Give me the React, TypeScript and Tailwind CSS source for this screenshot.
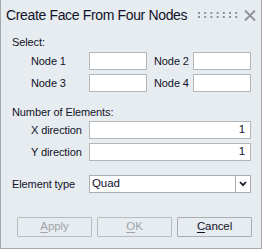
import React from "react";

const font = { fontFamily: '"Liberation Sans", Arial, sans-serif' };

function Dots() {
  const cols = [0, 1, 2, 3, 4, 5, 6];
  return (
    <svg width="40" height="8" viewBox="0 0 40 8" className="block">
      {cols.map((i) => (
        <g key={i}>
          <rect x={i * 6.2} y={1} width={2} height={2} fill="#8f9398" />
          <rect x={i * 6.2} y={5} width={2} height={2} fill="#8f9398" />
        </g>
      ))}
    </svg>
  );
}

function Input({ w, value }: { w: string; value?: string }) {
  return (
    <div
      className={`${w} h-[18px] bg-white border border-[#b3b7ba] flex items-center justify-end pr-[5px] text-[11.5px] text-[#14142a]`}
    >
      {value}
    </div>
  );
}

export default function App() {
  return (
    <div
      style={font}
      className="w-[262px] h-[249px] bg-[#e6ecf0] border-x border-b border-[#a5a9ad] flex flex-col text-[#121228] text-[11px] tracking-[-0.1px]"
    >
      <div className="h-[30px] flex items-center pl-[5px] pr-[4px]">
        <span className="text-[14px] tracking-[-0.35px] leading-none">Create Face From Four Nodes</span>
        <div className="ml-auto flex items-center gap-[6px]">
          <div className="mt-[-1px]">
            <Dots />
          </div>
          <svg width="12" height="11" viewBox="0 0 12 11" className="block mr-[1px]">
            <path d="M1 0.5 L11 10.5 M11 0.5 L1 10.5" stroke="#8d9196" strokeWidth="1.9" />
          </svg>
        </div>
      </div>

      <div className="mt-[5px] h-[14px] pl-[11px] flex items-center leading-none">Select:</div>

      <div className="mt-[3px] flex items-center h-[18px]">
        <span className="w-[88px] pl-[30px] leading-none">Node 1</span>
        <Input w="w-[58px]" />
        <span className="w-[46px] pl-[7px] leading-none">Node 2</span>
        <Input w="w-[58px]" />
      </div>
      <div className="mt-[4px] flex items-center h-[18px]">
        <span className="w-[88px] pl-[30px] leading-none">Node 3</span>
        <Input w="w-[58px]" />
        <span className="w-[46px] pl-[7px] leading-none">Node 4</span>
        <Input w="w-[58px]" />
      </div>

      <div className="mt-[13px] h-[14px] pl-[11px] flex items-center leading-none">Number of Elements:</div>

      <div className="mt-[2px] flex items-center h-[18px]">
        <span className="w-[88px] pl-[30px] leading-none">X direction</span>
        <Input w="w-[162px]" value="1" />
      </div>
      <div className="mt-[4px] flex items-center h-[18px]">
        <span className="w-[88px] pl-[30px] leading-none">Y direction</span>
        <Input w="w-[162px]" value="1" />
      </div>

      <div className="mt-[14px] flex items-center h-[18px]">
        <span className="w-[88px] pl-[11px] leading-none">Element type</span>
        <div className="w-[162px] h-[18px] bg-white border border-[#a9adb1] flex items-stretch">
          <span className="flex-1 flex items-center pl-[2px] leading-none text-[11.5px]">Quad</span>
          <div className="w-[15px] border-l border-[#a9adb1] flex items-center justify-center">
            <svg width="8" height="6" viewBox="0 0 8 6" className="block">
              <path d="M1 1 L4 4.2 L7 1" stroke="#1c1c2a" strokeWidth="1.8" fill="none" />
            </svg>
          </div>
        </div>
      </div>

      <div className="mt-[24px] flex h-[20px] pl-[16px] gap-[5px] text-[11.5px]">
        <button className="w-[75px] h-[20px] border border-[#b8bcbf] rounded-[1px] text-[#a0a4a8] bg-[#e6ecf0] leading-none">
          <span className="underline underline-offset-[2px]">A</span>pply
        </button>
        <button className="w-[75px] h-[20px] border border-[#b8bcbf] rounded-[1px] text-[#a0a4a8] bg-[#e6ecf0] leading-none">
          <span className="underline underline-offset-[2px]">O</span>K
        </button>
        <button className="w-[75px] h-[20px] border border-[#a9adb1] rounded-[1px] text-[#121228] bg-[#e6ecf0] leading-none">
          <span className="underline underline-offset-[2px]">C</span>ancel
        </button>
      </div>
    </div>
  );
}
